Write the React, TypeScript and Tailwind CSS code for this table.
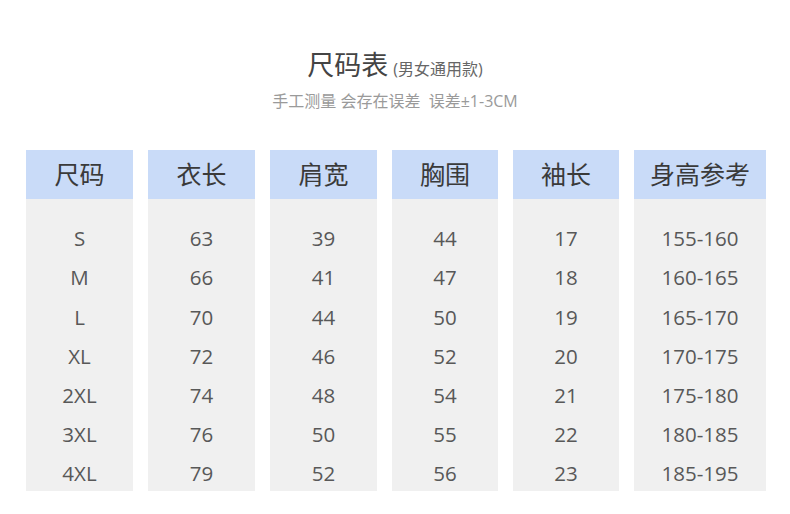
const font = "font-['Open_Sans','Noto_Sans_CJK_SC',sans-serif]";

const columns = [
  { title: "尺码", width: "w-[107px]", values: ["S", "M", "L", "XL", "2XL", "3XL", "4XL"] },
  { title: "衣长", width: "w-[107px]", values: ["63", "66", "70", "72", "74", "76", "79"] },
  { title: "肩宽", width: "w-[107px]", values: ["39", "41", "44", "46", "48", "50", "52"] },
  { title: "胸围", width: "w-[106px]", values: ["44", "47", "50", "52", "54", "55", "56"] },
  { title: "袖长", width: "w-[106px]", values: ["17", "18", "19", "20", "21", "22", "23"] },
  { title: "身高参考", width: "w-[132px]", values: ["155-160", "160-165", "165-170", "170-175", "175-180", "180-185", "185-195"] },
];

export default function App() {
  return (
    <div className={`h-[514px] w-[790px] bg-white ${font}`}>
      <div className="flex flex-col items-center pt-[48px]">
        <div className="flex items-baseline gap-[5px] text-[#444]">
          <span className="text-[27px] leading-[34px]">尺码表</span>
          <span className="text-[16px] text-[#666]">(男女通用款)</span>
        </div>
        <div className="mt-[8px] whitespace-pre text-[16px] leading-[22px] text-[#9a9a9a]">手工测量 会存在误差  误差±1-3CM</div>
      </div>

      <div className="mt-[38px] flex gap-[15px] pl-[26px]">
        {columns.map((col) => (
          <div key={col.title} className={col.width}>
            <div className="flex h-[49px] items-center justify-center bg-[#c9dbf8] text-[25px] text-[#3a3a3a]">{col.title}</div>
            <div className="h-[292px] bg-[#f0f0f0] pt-[20px]">
              {col.values.map((v) => (
                <div key={v} className="flex h-[39.2px] items-center justify-center text-[20.5px] text-[#585858]">
                  {v}
                </div>
              ))}
            </div>
          </div>
        ))}
      </div>
    </div>
  );
}
